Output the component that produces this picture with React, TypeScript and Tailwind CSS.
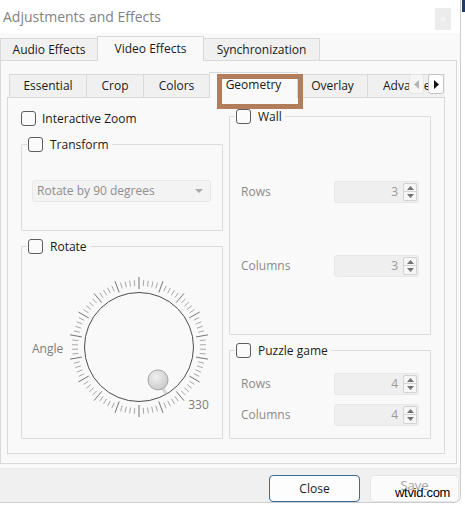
import React from 'react';

function Checkbox() {
  return <span className="block w-[15px] h-[15px] shrink-0 rounded-[3px] border border-[#5e5e5e] bg-[#fbfbfb]" />;
}

function GroupBox({ label, className, children }: { label: string; className?: string; children: React.ReactNode }) {
  return (
    <fieldset className={`w-full border border-[#dcdcdc] rounded-[1px] ${className ?? ''}`}>
      <legend className="ml-[5px] px-[1px]">
        <span className="flex items-center gap-[7px] h-[17px] pr-[2px]">
          <Checkbox />
          <span className="text-[#1b1b1b]">{label}</span>
        </span>
      </legend>
      {children}
    </fieldset>
  );
}

function SpinBox({ value }: { value: number }) {
  return (
    <div className="w-[85px] h-[22px] flex items-center bg-[#efefef] border border-[#e7e7e7] rounded-[3px]">
      <span className="flex-1 text-right pr-[5px] text-[#9a9a9a]">{value}</span>
      <div className="w-[14px] h-[18px] mr-[1px] flex flex-col">
        <div className="h-[9px] border border-[#d2d2d2] bg-[#f6f6f6] rounded-t-[2px] flex items-center justify-center">
          <svg width="7" height="4" viewBox="0 0 7 4"><path d="M0 4 L3.5 0 L7 4 Z" fill="#737373" /></svg>
        </div>
        <div className="h-[9px] border border-t-0 border-[#d2d2d2] bg-[#f6f6f6] rounded-b-[2px] flex items-center justify-center">
          <svg width="7" height="4" viewBox="0 0 7 4"><path d="M0 0 L3.5 4 L7 0 Z" fill="#737373" /></svg>
        </div>
      </div>
    </div>
  );
}

function SpinRow({ label, value, className }: { label: string; value: number; className?: string }) {
  return (
    <div className={`h-[22px] flex items-center justify-between px-[11px] ${className ?? ''}`}>
      <span className="text-[#8a8a8a]">{label}</span>
      <SpinBox value={value} />
    </div>
  );
}

function Dial() {
  const cx = 75;
  const cy = 75;
  const ticks = Array.from({ length: 90 }, (_, i) => {
    const a = (i * 4 * Math.PI) / 180;
    const major = i % 5 === 0;
    const r1 = major ? 58 : 61;
    const r2 = major ? 70 : 67;
    const dx = Math.sin(a);
    const dy = Math.cos(a);
    return (
      <line
        key={i}
        x1={cx + dx * r1}
        y1={cy + dy * r1}
        x2={cx + dx * r2}
        y2={cy + dy * r2}
        stroke={major ? '#747474' : '#a8a8a8'}
        strokeWidth={1}
      />
    );
  });
  const v = (330 * Math.PI) / 180;
  const ux = -Math.sin(v);
  const uy = Math.cos(v);
  return (
    <div className="relative w-[150px] h-[150px] ml-[1px]">
      <svg width="150" height="150" viewBox="0 0 150 150">
        <defs>
          <radialGradient id="knob" cx="40%" cy="35%" r="70%">
            <stop offset="0%" stopColor="#f0f0f0" />
            <stop offset="100%" stopColor="#c9c9c9" />
          </radialGradient>
        </defs>
        {ticks}
        <circle cx={cx} cy={cy} r={54.5} fill="none" stroke="#4d4d4d" strokeWidth={1} />
        <line x1={cx + ux * 46} y1={cy + uy * 46} x2={cx + ux * 54} y2={cy + uy * 54} stroke="#d6d6d6" strokeWidth={3} />
        <circle cx={cx + ux * 38} cy={cy + uy * 38} r={10} fill="url(#knob)" stroke="#a6a6a6" strokeWidth={1} />
      </svg>
      <span className="absolute left-[124px] top-[125px] text-[#7c7c7c]">330</span>
    </div>
  );
}

const innerTabs = [
  { label: 'Essential', w: 'w-[78px]' },
  { label: 'Crop', w: 'w-[58px]' },
  { label: 'Colors', w: 'w-[67px]' },
  { label: 'Geometry', w: 'w-[89px]', active: true },
  { label: 'Overlay', w: 'w-[71px]' },
  { label: 'Advanced', w: 'w-[92px]' },
];

const mainTabs = [
  { label: 'Audio Effects', w: 'w-[98px]' },
  { label: 'Video Effects', w: 'w-[107px]', active: true },
  { label: 'Synchronization', w: 'w-[117px]' },
];

export default function App() {
  return (
    <div className="w-[465px] h-[505px] bg-white relative overflow-hidden flex font-['Open_Sans','Noto_Sans',sans-serif] text-[12px] leading-[16px] text-[#1a1a1a]">
      <div className="w-[461px] h-[503px] shrink-0 flex flex-col bg-[#f9f9f9] border-r border-b border-[#cdcdcd] rounded-br-[7px] overflow-hidden">
        {/* Title bar */}
        <div className="h-[33px] shrink-0 bg-white flex items-center justify-between pl-[3px] pr-[9px]">
          <span className="text-[14px] text-[#828282]">Adjustments and Effects</span>
          <div className="w-[16px] h-[22px] mt-[5px] bg-[#ececec] flex items-center justify-center text-[#fafafa] text-[11px]">×</div>
        </div>

        {/* Main tabs */}
        <div className="h-[28px] shrink-0 -mb-px flex items-end">
          {mainTabs.map((t, i) =>
            t.active ? (
              <div key={t.label} className={`${t.w} h-[25px] -ml-px relative z-10 bg-[#f9f9f9] border border-b-0 border-[#d9d9d9] flex items-center justify-center`}>
                {t.label}
              </div>
            ) : (
              <div key={t.label} className={`${t.w} h-[22px] mb-px ${i > 0 ? '-ml-px' : ''} bg-[#f0f0f0] border border-b-0 border-[#d9d9d9] flex items-center justify-center`}>
                {t.label}
              </div>
            ),
          )}
        </div>

        {/* Video Effects pane */}
        <div className="w-[457px] h-[404px] shrink-0 border border-[#d9d9d9] bg-[#f9f9f9] pt-[11px] pl-[6px]">
          {/* Inner tabs */}
          <div className="relative w-[438px] h-[26px] -mb-px pl-[2px] flex items-end overflow-hidden">
            {innerTabs.map((t, i) =>
              t.active ? (
                <div key={t.label} className={`${t.w} shrink-0 h-[26px] pb-[2px] -ml-px relative z-10 bg-[#f9f9f9] border border-b-0 border-[#d9d9d9] flex items-center justify-center`}>
                  {t.label}
                </div>
              ) : (
                <div key={t.label} className={`${t.w} shrink-0 h-[23px] mb-px ${i > 0 ? '-ml-px' : ''} bg-[#f0f0f0] border border-b-0 border-[#d9d9d9] flex items-center justify-center ${t.label === 'Advanced' ? 'justify-start pl-[15px]' : ''}`}>
                  {t.label}
                </div>
              ),
            )}
            <div className="absolute z-20 left-[402px] top-[2px] w-[15px] h-[20px] bg-[#f6f6f6] border border-[#e6e6e6] rounded-[3px] flex items-center justify-center">
              <svg width="5" height="9" viewBox="0 0 5 9"><path d="M5 0 L0 4.5 L5 9 Z" fill="#b4b4b4" /></svg>
            </div>
            <div className="absolute z-20 left-[421px] top-[2px] w-[16px] h-[20px] bg-white border border-[#c4c4c4] rounded-[3px] flex items-center justify-center">
              <svg width="5" height="9" viewBox="0 0 5 9"><path d="M0 0 L5 4.5 L0 9 Z" fill="#111111" /></svg>
            </div>
          </div>

          {/* Geometry page */}
          <div className="w-[438px] h-[357px] border border-[#d9d9d9] bg-[#f9f9f9] pt-[10px] pl-[13px] flex gap-[6px]">
            {/* Left column */}
            <div className="w-[202px] mt-[2px] flex flex-col">
              <div className="h-[17px] flex items-center gap-[6px]">
                <Checkbox />
                <span>Interactive Zoom</span>
              </div>
              <GroupBox label="Transform" className="mt-[9px]">
                <div className="mt-[27px] mb-[28px] ml-[10px] mr-[11px] h-[22px] flex items-center justify-between bg-[#f3f3f3] border border-[#e8e8e8] rounded-[3px] pl-[4px] pr-[7px]">
                  <span className="text-[#8e8e8e]">Rotate by 90 degrees</span>
                  <svg width="8" height="4" viewBox="0 0 8 4"><path d="M0 0 L4 4 L8 0 Z" fill="#ababab" /></svg>
                </div>
              </GroupBox>
              <GroupBox label="Rotate" className="mt-[7px]">
                <div className="mt-[17px] mb-[16px] pl-[10px] flex items-center">
                  <span className="mt-[4px] text-[#7c7c7c]">Angle</span>
                  <Dial />
                </div>
              </GroupBox>
            </div>

            {/* Right column */}
            <div className="w-[202px] flex flex-col">
              <GroupBox label="Wall">
                <SpinRow label="Rows" value={3} className="mt-[56px]" />
                <SpinRow label="Columns" value={3} className="mt-[52px] mb-[57px]" />
              </GroupBox>
              <GroupBox label="Puzzle game" className="mt-[7px]">
                <SpinRow label="Rows" value={4} className="mt-[14px]" />
                <SpinRow label="Columns" value={4} className="mt-[9px] mb-[12px]" />
              </GroupBox>
            </div>
          </div>
        </div>

        <div className="h-[4px] shrink-0" />

        {/* Button bar */}
        <div className="flex-1 bg-[#f0f0f0] border-t border-[#e9e9e9] flex justify-end items-start pt-[6px] pr-[1px] gap-[10px]">
          <button className="w-[91px] h-[27px] bg-[#fdfdfd] border border-[#3a6c96] rounded-[4px] flex items-center justify-center text-[#1a1a1a]">
            Close
          </button>
          <button className="w-[89px] h-[27px] bg-[#fbfbfb] border border-[#e6e6e6] rounded-[4px] flex items-center justify-center pb-[8px] text-[13px] text-[#a3a3a3]">
            Save
          </button>
        </div>
      </div>

      <div className="flex-1 pl-[1px]">
        <div className="h-[12px] bg-[#1f3c6c]" />
      </div>

      {/* annotation highlight */}
      <div className="absolute z-30 left-[217px] top-[74px] w-[86px] h-[35px] border-[5px] border-[#b27d5b]" />
      {/* watermark */}
      <div className="absolute z-30 left-[395px] top-[485px] font-['Liberation_Sans',Arial,sans-serif] text-[13px] leading-[16px] tracking-[-0.3px] text-black">
        wtvid.com
      </div>
    </div>
  );
}
